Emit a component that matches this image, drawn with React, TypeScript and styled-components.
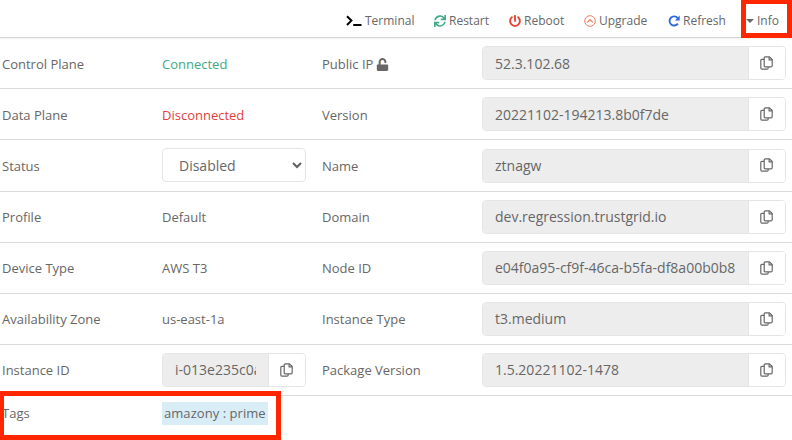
import React from "react";
import styled, { createGlobalStyle } from "styled-components";
import { FaPowerOff, FaSync, FaUnlock } from "react-icons/fa";

const GlobalStyle = createGlobalStyle`
  * { box-sizing: border-box; }
  body {
    margin: 0;
    background: #fff;
    color: #676767;
    font: 13px/18px "Open Sans", "Noto Sans", sans-serif;
    overflow: hidden;
  }
`;

const Page = styled.main`
  position: relative;
  width: 792px;
  height: 440px;
  overflow: hidden;
`;

const Toolbar = styled.nav`
  display: grid;
  grid-template-columns: 88px 75px 75px 84px 78px 46px;
  height: 38px;
  padding: 5px 0 0 346px;
  border-bottom: 1px solid #d5d7d7;
  box-shadow: 0 1px 2px rgba(0, 0, 0, 0.06);
  font-size: 12px;
`;

const Action = styled.a<{ $gap: number; $spacing?: number }>`
  display: flex;
  align-items: center;
  gap: ${(p) => p.$gap}px;
  letter-spacing: ${(p) => p.$spacing ?? 0}px;
  white-space: nowrap;
  svg { flex: none; margin-top: -1px; }
`;

const Row = styled.div<{ $height?: number }>`
  display: grid;
  grid-template-columns: 160px 160px 160px 304px;
  align-items: center;
  height: ${(p) => p.$height ?? 51}px;
  padding-left: 2px;
  border-bottom: 1px solid #dadbdb;
`;

/* Rows below the select sit on a slightly higher text baseline. */
const RaisedRow = styled(Row)`
  --label-top: 0px;
  --value-line: 31px;
`;

const TagRow = styled(Row)`
  --label-top: 0px;
  height: 34px;
  border-bottom: 0;
`;

const Text = styled.span<{ $color?: string }>`
  display: flex;
  align-items: center;
  gap: 3px;
  padding-top: var(--label-top, 2px);
  color: ${(p) => p.$color ?? "inherit"};
  white-space: nowrap;
`;

const Group = styled.div<{ $narrow?: boolean }>`
  display: flex;
  width: ${(p) => (p.$narrow ? 144 : 304)}px;
  height: 34px;
  border: 1px solid #e3e5e7;
  border-radius: 4px;
  overflow: hidden;
`;

const Field = styled.div`
  flex: 1;
  min-width: 0;
  padding: 0 12px;
  background: #ededed;
  font-size: 14px;
  line-height: var(--value-line, 33px);
`;

const Value = styled.div`
  overflow: hidden;
  white-space: nowrap;
`;

const CopyButton = styled.button`
  display: flex;
  align-items: center;
  justify-content: center;
  width: 37px;
  padding: 0 1px 1px 0;
  border: 0;
  border-left: 1px solid #e3e5e7;
  background: #fff;
  color: #676767;
`;

const Select = styled.div`
  display: flex;
  align-items: center;
  justify-content: space-between;
  width: 144px;
  height: 34px;
  margin-top: -2px;
  padding: 2px 3px 0 16px;
  border: 1px solid #e3e5e7;
  border-radius: 4px;
  font-size: 14px;
  svg { margin-bottom: 1px; }
`;

const Tag = styled.span`
  justify-self: start;
  width: 106px;
  height: 23px;
  padding: 0 2px;
  background: #d9edf7;
  line-height: 23px;
  letter-spacing: 0.05px;
  white-space: nowrap;
`;

const Highlight = styled.div`
  position: absolute;
  border: 5px solid #ff2600;
  pointer-events: none;
`;

const InfoHighlight = styled(Highlight)`
  top: 0;
  left: 741px;
  width: 51px;
  height: 38px;
  border-top-width: 4px;
`;

const TagsHighlight = styled(Highlight)`
  top: 391px;
  left: 0;
  width: 281px;
  height: 49px;
  border-left-width: 4px;
`;

const TerminalIcon = () => (
  <svg width="16" height="12" viewBox="0 0 16 12" fill="none" stroke="#000" strokeWidth="2">
    <path d="M1 1.3 5.4 5.6 1 10" />
    <path d="M7.2 10h8.3" />
  </svg>
);

const UpgradeIcon = () => (
  <svg width="12" height="12" viewBox="0 0 12 12" fill="none" stroke="#f07f5a" strokeWidth="1">
    <circle cx="6" cy="6" r="5.3" />
    <path d="m3.2 7.4 2.8-2.7 2.8 2.7" strokeWidth="1.2" />
  </svg>
);

const RefreshIcon = () => (
  <svg width="13" height="12" viewBox="0 0 13 12" fill="none">
    <path d="M9.6 2.9A4.6 4.6 0 1 0 9.9 8.6" stroke="#2a6bdc" strokeWidth="1.9" />
    <path d="M11.7.4v5H6.8z" fill="#2a6bdc" />
  </svg>
);

const CaretIcon = () => (
  <svg width="8" height="4" viewBox="0 0 8 4" fill="#676767">
    <path d="M0 0h8L4 4z" />
  </svg>
);

const CopyIcon = () => (
  <svg width="13" height="14" viewBox="0 0 13 14" fill="none" stroke="currentColor" strokeWidth="1.2" strokeLinejoin="round">
    <path d="M4.2 1.9c0-.7.4-1.1 1.1-1.1h4.2l2.7 2.7v6.2c0 .7-.4 1.1-1.1 1.1H5.3c-.7 0-1.1-.4-1.1-1.1z" />
    <path d="M9.1.9v3h3" />
    <path d="M4.1 3.3H1.9c-.7 0-1.1.4-1.1 1.1v7.7c0 .7.4 1.1 1.1 1.1h5.2c.7 0 1.1-.4 1.1-1.1v-1.2" />
  </svg>
);

const ChevronIcon = () => (
  <svg width="10" height="7" viewBox="0 0 10 7" fill="none" stroke="#5f5f5f" strokeWidth="2">
    <path d="m1 1 4 4 4-4" />
  </svg>
);

type CopyFieldProps = { value: string; narrow?: boolean };

const CopyField = ({ value, narrow }: CopyFieldProps) => (
  <Group $narrow={narrow}>
    <Field>
      <Value>{value}</Value>
    </Field>
    <CopyButton aria-label="Copy">
      <CopyIcon />
    </CopyButton>
  </Group>
);

export default function App() {
  return (
    <>
      <GlobalStyle />
      <Page>
        <Toolbar>
          <Action $gap={3}><TerminalIcon />Terminal</Action>
          <Action $gap={3}><FaSync size={12} color="#41a985" />Restart</Action>
          <Action $gap={3}><FaPowerOff size={12} color="#ea4335" />Reboot</Action>
          <Action $gap={3}><UpgradeIcon />Upgrade</Action>
          <Action $gap={2}><RefreshIcon />Refresh</Action>
          <Action $gap={3}><CaretIcon />Info</Action>
        </Toolbar>
        <Row>
          <Text>Control Plane</Text>
          <Text $color="#41a985">Connected</Text>
          <Text>Public IP <FaUnlock size={13} /></Text>
          <CopyField value="52.3.102.68" />
        </Row>
        <Row>
          <Text>Data Plane</Text>
          <Text $color="#e53e3e">Disconnected</Text>
          <Text>Version</Text>
          <CopyField value="20221102-194213.8b0f7de" />
        </Row>
        <RaisedRow $height={52}>
          <Text>Status</Text>
          <Select>Disabled<ChevronIcon /></Select>
          <Text>Name</Text>
          <CopyField value="ztnagw" />
        </RaisedRow>
        <RaisedRow>
          <Text>Profile</Text>
          <Text>Default</Text>
          <Text>Domain</Text>
          <CopyField value="dev.regression.trustgrid.io" />
        </RaisedRow>
        <RaisedRow>
          <Text>Device Type</Text>
          <Text>AWS T3</Text>
          <Text>Node ID</Text>
          <CopyField value="e04f0a95-cf9f-46ca-b5fa-df8a00b0b8" />
        </RaisedRow>
        <RaisedRow>
          <Text>Availability Zone</Text>
          <Text>us-east-1a</Text>
          <Text>Instance Type</Text>
          <CopyField value="t3.medium" />
        </RaisedRow>
        <RaisedRow>
          <Text>Instance ID</Text>
          <CopyField value="i-013e235c0a" narrow />
          <Text>Package Version</Text>
          <CopyField value="1.5.20221102-1478" />
        </RaisedRow>
        <TagRow>
          <Text>Tags</Text>
          <Tag>amazony : prime</Tag>
        </TagRow>
        <InfoHighlight />
        <TagsHighlight />
      </Page>
    </>
  );
}
